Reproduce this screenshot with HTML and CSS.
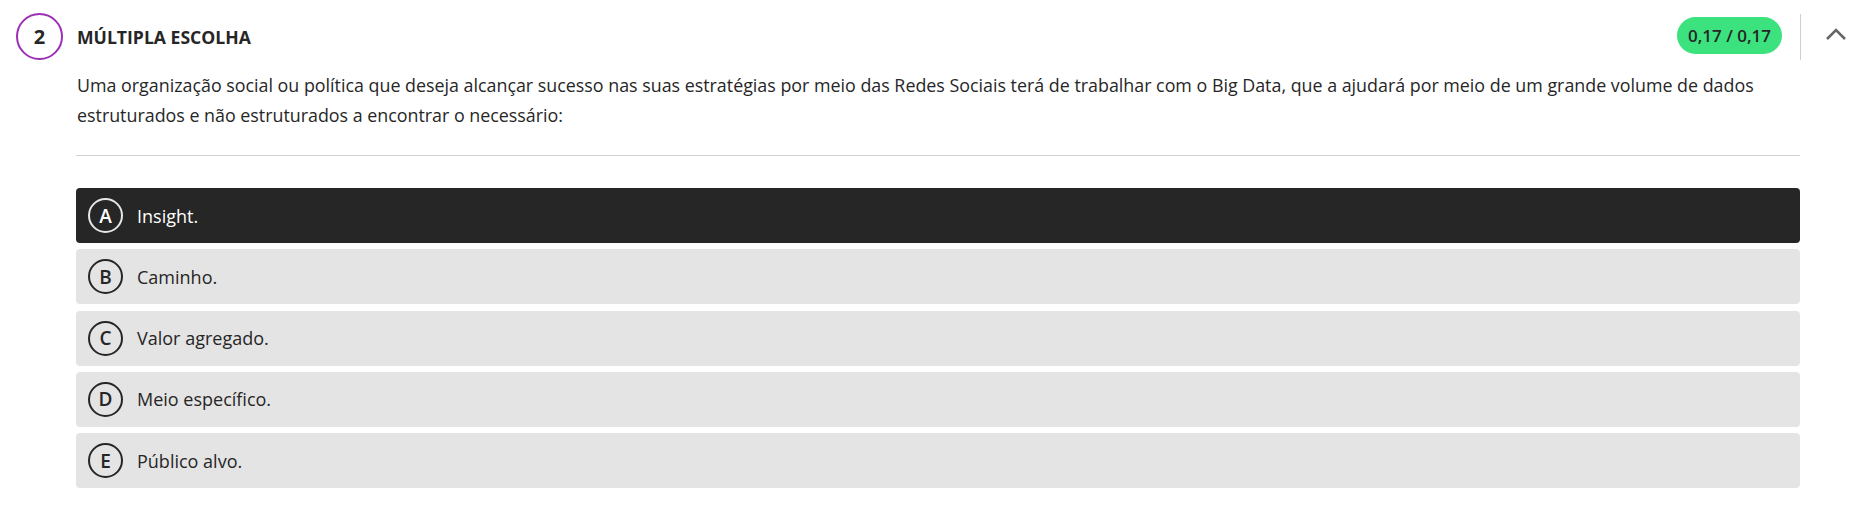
FILE: index.html
```html
<!DOCTYPE html>
<html lang="pt">
<head>
<meta charset="utf-8">
<link rel="stylesheet" href="styles.css">
</head>
<body>
<section class="question">
  <header class="q-header">
    <div class="q-number">2</div>
    <h2 class="q-type">MÚLTIPLA ESCOLHA</h2>
    <div class="q-score">0,17 / 0,17</div>
    <div class="q-divider"></div>
    <button class="q-toggle" aria-label="Recolher">
      <svg width="22" height="14" viewBox="0 0 22 14"><path d="M2 12 L11 3 L20 12" fill="none" stroke="#666" stroke-width="2.6"/></svg>
    </button>
  </header>
  <div class="q-body">
    <p class="q-text">Uma organização social ou política que deseja alcançar sucesso nas suas estratégias por meio das Redes Sociais terá de trabalhar com o Big Data, que a ajudará por meio de um grande volume de dados estruturados e não estruturados a encontrar o necessário:</p>
    <hr class="q-rule">
    <ul class="options">
      <li class="option selected"><span class="letter">A</span><span class="opt-text">Insight.</span></li>
      <li class="option"><span class="letter">B</span><span class="opt-text">Caminho.</span></li>
      <li class="option"><span class="letter">C</span><span class="opt-text">Valor agregado.</span></li>
      <li class="option"><span class="letter">D</span><span class="opt-text">Meio específico.</span></li>
      <li class="option"><span class="letter">E</span><span class="opt-text">Público alvo.</span></li>
    </ul>
  </div>
</section>
</body>
</html>
```

FILE: styles.css
```css
* { box-sizing: border-box; }
html, body { margin: 0; padding: 0; background: #fff; }
body {
  font-family: "Open Sans", "Noto Sans", sans-serif;
  color: #262626;
}
.question { width: 1850px; padding: 13px 3px 0 16px; }
.q-header {
  display: flex;
  align-items: center;
  height: 47px;
}
.q-number {
  width: 47px;
  height: 47px;
  border: 2px solid #9c2fb5;
  border-radius: 50%;
  display: flex;
  align-items: center;
  justify-content: center;
  font-size: 20px;
  font-weight: 700;
  flex: none;
}
.q-type {
  margin: 0 0 0 14px;
  font-size: 17.6px;
  font-weight: 700;
  flex: 1;
  letter-spacing: 0;
}
.q-score {
  background: #3ce27d;
  border-radius: 19px;
  height: 37px;
  padding: 0 11px;
  display: flex;
  align-items: center;
  font-size: 17px;
  font-weight: 600;
  margin-top: -2px;
}
.q-divider {
  width: 1px;
  height: 46px;
  background: #cfcfcf;
  margin-left: 18px;
}
.q-toggle {
  border: 0;
  background: none;
  padding: 0;
  margin-left: 24px;
  width: 22px;
  height: 14px;
  display: flex;
  margin-top: -6px;
}
.q-body { margin-left: 60px; width: 1724px; }
.q-text {
  margin: 11px 0 0 1px;
  font-size: 17.85px;
  line-height: 29.5px;
}
.q-rule {
  border: 0;
  height: 1px;
  background: #d2d2d2;
  margin: 25px 0 0 0;
}
.options { list-style: none; margin: 32px 0 0 0; padding: 0; display: flex; flex-direction: column; gap: 6.3px; }
.option {
  height: 55px;
  background: #e4e4e4;
  border-radius: 4px;
  display: flex;
  align-items: center;
  padding-left: 12px;
  font-size: 18px;
}
.option.selected { background: #262626; color: #fff; }
.letter {
  width: 35px;
  height: 35px;
  border: 2px solid #262626;
  border-radius: 50%;
  display: flex;
  align-items: center;
  justify-content: center;
  font-size: 19px;
  font-weight: 600;
  flex: none;
}
.option.selected .letter { border-color: #e6e6e6; }
.opt-text { margin-left: 14px; }
```
